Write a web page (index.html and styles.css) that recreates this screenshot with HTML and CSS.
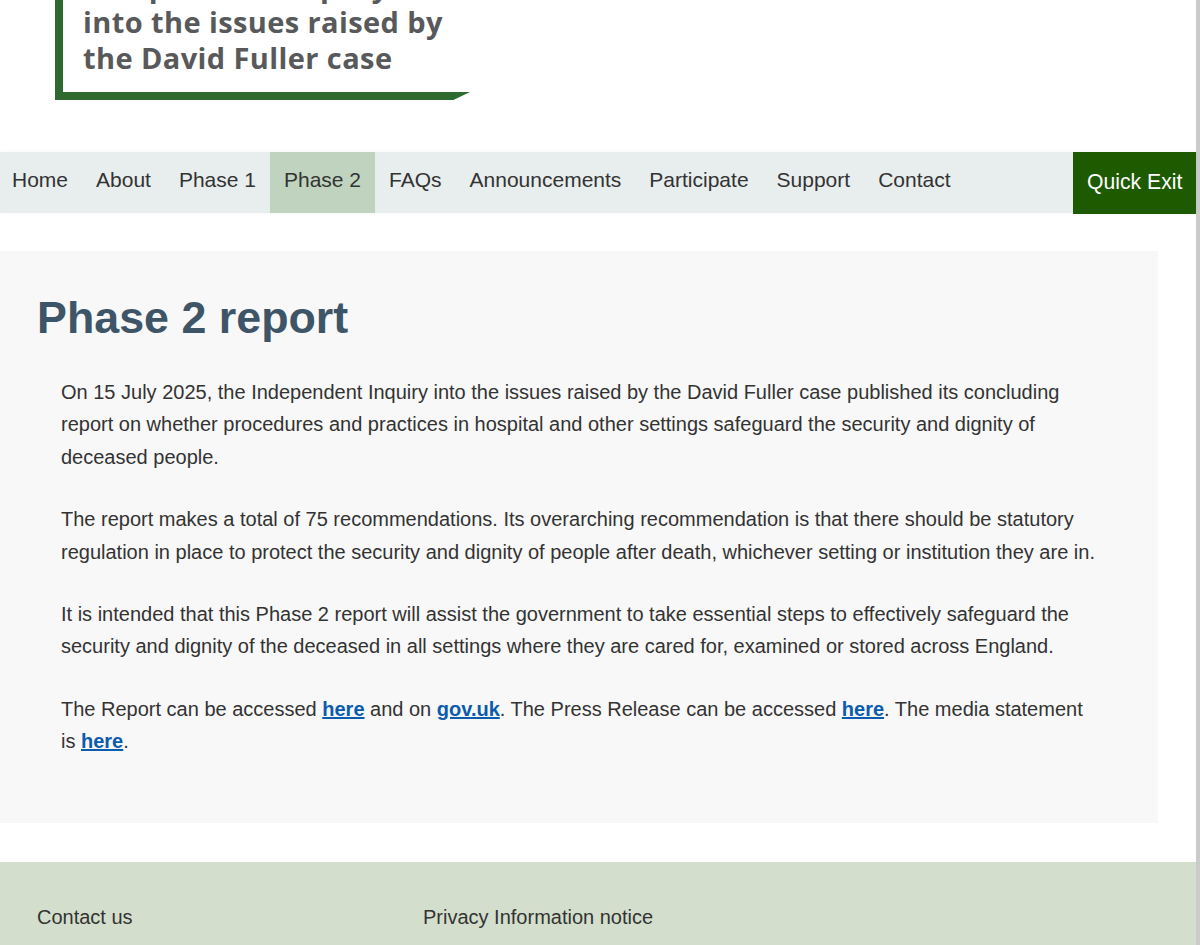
FILE: index.html
```html
<!DOCTYPE html>
<html lang="en">
<head>
<meta charset="utf-8">
<title>Phase 2 report</title>
<link rel="stylesheet" href="styles.css">
</head>
<body>
<div class="page">
  <header class="brand">
    <div class="logo">
      <div class="logo-text">
        <span class="logo-line">Independent Inquiry</span>
        <span class="logo-line">into the issues raised by</span>
        <span class="logo-line">the David Fuller case</span>
      </div>
      <div class="logo-bar"></div>
    </div>
  </header>

  <nav class="nav">
    <ul class="nav-list">
      <li><a class="nav-link" href="#">Home</a></li>
      <li><a class="nav-link" href="#">About</a></li>
      <li><a class="nav-link" href="#">Phase 1</a></li>
      <li><a class="nav-link active" href="#">Phase 2</a></li>
      <li><a class="nav-link" href="#">FAQs</a></li>
      <li><a class="nav-link" href="#">Announcements</a></li>
      <li><a class="nav-link" href="#">Participate</a></li>
      <li><a class="nav-link" href="#">Support</a></li>
      <li><a class="nav-link" href="#">Contact</a></li>
    </ul>
    <a class="quick-exit" href="#">Quick Exit</a>
  </nav>

  <main class="content">
    <h1 class="title">Phase 2 report</h1>
    <div class="body-text">
      <p>On 15 July 2025, the Independent Inquiry into the issues raised by the David Fuller case published its concluding report on whether procedures and practices in hospital and other settings safeguard the security and dignity of deceased people.</p>
      <p>The report makes a total of 75 recommendations. Its overarching recommendation is that there should be statutory regulation in place to protect the security and dignity of people after death, whichever setting or institution they are in.</p>
      <p>It is intended that this Phase 2 report will assist the government to take essential steps to effectively safeguard the security and dignity of the deceased in all settings where they are cared for, examined or stored across England.</p>
      <p>The Report can be accessed <a class="link" href="#">here</a> and on <a class="link" href="#">gov.uk</a>. The Press Release can be accessed <a class="link" href="#">here</a>. The media statement is <a class="link" href="#">here</a>.</p>
    </div>
  </main>

  <footer class="footer">
    <a class="footer-link" href="#">Contact us</a>
    <a class="footer-link" href="#">Privacy Information notice</a>
  </footer>
</div>
</body>
</html>
```

FILE: styles.css
```css
* { box-sizing: border-box; }

html, body {
  margin: 0;
  padding: 0;
  background: #ffffff;
}

body {
  font-family: "Liberation Sans", Arial, sans-serif;
  color: #333333;
  overflow: hidden;
}

.page {
  width: 1200px;
  min-height: 945px;
  border-right: 4px solid #cbcbcb;
}

/* Brand / logo */
.brand {
  display: flex;
  align-items: flex-start;
  padding-left: 55px;
  height: 152px;
}

.logo {
  margin-top: -32px;
}

.logo-text {
  border-left: 8px solid #2e6a30;
  padding: 0 20px 16px 20px;
  display: flex;
  flex-direction: column;
  font-family: "Open Sans", "Liberation Sans", sans-serif;
  font-weight: 700;
  font-size: 29px;
  line-height: 36px;
  color: #58595b;
  letter-spacing: 0.4px;
}

.logo-bar {
  width: 415px;
  height: 8px;
  background: #2e6a30;
  clip-path: polygon(0 0, 100% 0, 96% 100%, 0 100%);
}

/* Navigation */
.nav {
  display: flex;
  justify-content: space-between;
  align-items: stretch;
  height: 61px;
  width: 1196px;
  background: #e8eded;
  box-shadow: 0 0 4px rgba(0, 0, 0, 0.04);
}

.nav-list {
  list-style: none;
  margin: 0 0 0 -2px;
  padding: 0;
  display: flex;
  align-items: stretch;
}

.nav-list li {
  display: flex;
}

.nav-link {
  display: flex;
  align-items: center;
  padding: 0 14px 5px 14px;
  font-size: 21px;
  color: #333333;
  text-decoration: none;
}

.nav-link.active {
  background: #bfd3bf;
}

.quick-exit {
  display: flex;
  align-items: center;
  padding: 0 0 2px 14px;
  background: #1e5b00;
  color: #ffffff;
  font-size: 21.2px;
  text-decoration: none;
  width: 123px;
  height: 62px;
}

/* Content */
.content {
  margin-top: 38px;
  width: 1158px;
  background: #f8f8f8;
  padding: 36px 60px 35px 37px;
}

.title {
  margin: 0 0 29px 0;
  font-size: 44.8px;
  line-height: 60px;
  font-weight: 700;
  color: #3d5566;
}

.body-text {
  padding-left: 24px;
}

.body-text p {
  margin: 0 0 30px 0;
  font-size: 20px;
  line-height: 32.4px;
  color: #333333;
}

.link {
  color: #0b5cad;
  font-weight: 700;
  text-decoration: underline;
}

/* Footer */
.footer {
  margin-top: 39px;
  width: 1196px;
  background: #d3dfcc;
  padding: 40px 37px 40px 37px;
  display: flex;
}

.footer-link {
  font-size: 20px;
  line-height: 30px;
  color: #333333;
  text-decoration: none;
  width: 386px;
}
```
